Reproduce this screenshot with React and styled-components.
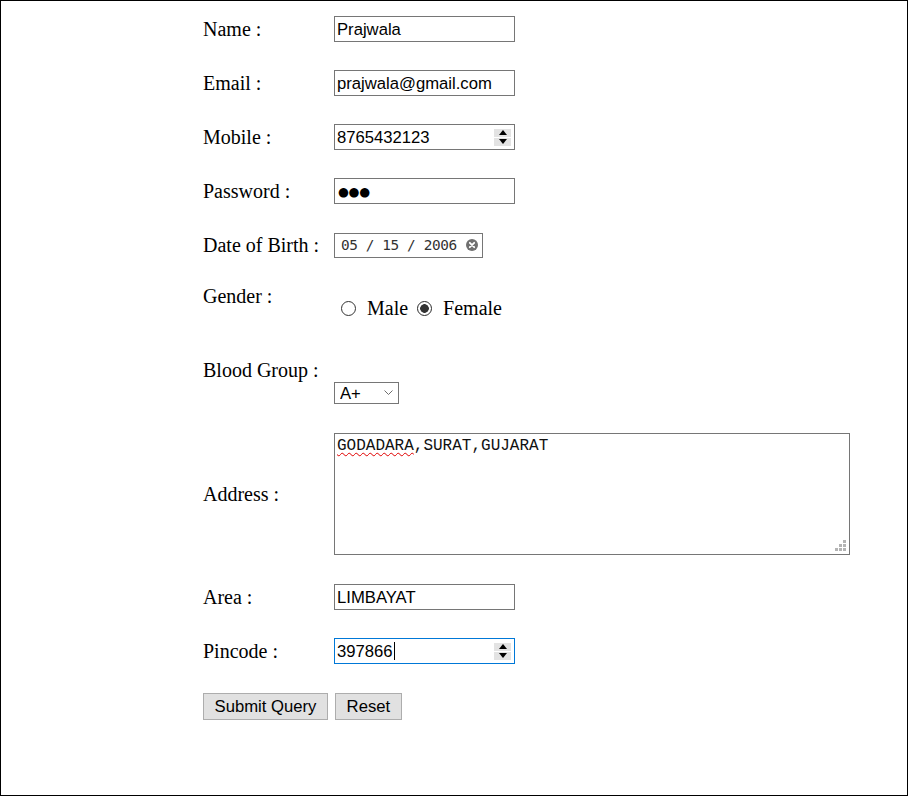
import React from 'react';
import styled, { createGlobalStyle } from 'styled-components';

const GlobalStyle = createGlobalStyle`
  * {
    box-sizing: border-box;
  }
  html,
  body {
    margin: 0;
    padding: 0;
    background: #fff;
  }
  body {
    font-family: "Liberation Serif", "Times New Roman", serif;
    color: #000;
  }
`;

const controlFont = `16.67px "Liberation Sans", Arial, sans-serif`;

function App() {
  return (
    <>
      <GlobalStyle />
      <Page>
        <Form onSubmit={e => e.preventDefault()}>
          <Row h={54}>
            <Label>Name :</Label>
            <TextInput type="text" defaultValue="Prajwala" />
          </Row>
          <Row h={54}>
            <Label>Email :</Label>
            <TextInput type="text" defaultValue="prajwala@gmail.com" />
          </Row>
          <Row h={54}>
            <Label>Mobile :</Label>
            <NumberField value="8765432123" />
          </Row>
          <Row h={54}>
            <Label>Password :</Label>
            <FieldBox aria-label="password">
              <Dots>●●●</Dots>
            </FieldBox>
          </Row>
          <Row h={54}>
            <Label>Date of Birth :</Label>
            <DateBox>
              <DateText>05 / 15 / 2006</DateText>
              <ClearIcon />
            </DateBox>
          </Row>
          <Row h={49}>
            <Label>Gender :</Label>
            <Stack lead={23}>
              <RadioLine>
                <RadioOption first>
                  <Radio type="radio" name="gender" value="male" />
                  Male
                </RadioOption>
                <RadioOption>
                  <Radio type="radio" name="gender" value="female" defaultChecked />
                  Female
                </RadioOption>
              </RadioLine>
            </Stack>
          </Row>
          <Row h={98}>
            <Label>Blood Group :</Label>
            <Stack lead={46}>
              <SelectBox>
                <Select defaultValue="A+">
                  <option>A+</option>
                  <option>A-</option>
                  <option>B+</option>
                  <option>B-</option>
                  <option>O+</option>
                  <option>O-</option>
                  <option>AB+</option>
                  <option>AB-</option>
                </Select>
                <Chevron width="9" height="5" viewBox="0 0 9 5">
                  <path d="M0.5 0.5 L4.5 4.5 L8.5 0.5" fill="none" stroke="#6d6d6d" strokeWidth="1" />
                </Chevron>
              </SelectBox>
            </Stack>
          </Row>
          <Row h={150}>
            <Label>Address :</Label>
            <AddressBox>
              <Misspelled>GODADARA</Misspelled>,SURAT,GUJARAT
              <Grip width="11" height="11" viewBox="0 0 11 11">
                <rect x="8" y="0" width="3" height="3" fill="#b4b4b4" />
                <rect x="4" y="4" width="3" height="3" fill="#b4b4b4" />
                <rect x="8" y="4" width="3" height="3" fill="#b4b4b4" />
                <rect x="0" y="8" width="3" height="3" fill="#b4b4b4" />
                <rect x="4" y="8" width="3" height="3" fill="#b4b4b4" />
                <rect x="8" y="8" width="3" height="3" fill="#b4b4b4" />
              </Grip>
            </AddressBox>
          </Row>
          <Row h={56}>
            <Label>Area :</Label>
            <TextInput type="text" defaultValue="LIMBAYAT" />
          </Row>
          <Row h={52}>
            <Label>Pincode :</Label>
            <NumberField value="397866" focused />
          </Row>
          <ButtonRow>
            <Button type="submit">Submit Query</Button>
            <Button type="reset">Reset</Button>
          </ButtonRow>
        </Form>
      </Page>
    </>
  );
}

function NumberField({ value, focused }) {
  return (
    <FieldBox focused={focused}>
      <FieldText>{value}</FieldText>
      {focused && <Caret />}
      <Spinner>
        <SpinHalf>
          <svg width="8" height="5" viewBox="0 0 8 5">
            <path d="M0 5 L4 0 L8 5 Z" fill="#000" />
          </svg>
        </SpinHalf>
        <SpinHalf>
          <svg width="8" height="5" viewBox="0 0 8 5">
            <path d="M0 0 L4 5 L8 0 Z" fill="#000" />
          </svg>
        </SpinHalf>
      </Spinner>
    </FieldBox>
  );
}

function ClearIcon() {
  return (
    <ClearSvg width="12" height="12" viewBox="0 0 12 12">
      <circle cx="6" cy="6" r="6" fill="#6f6f6f" />
      <path d="M3.8 3.8 L8.2 8.2 M8.2 3.8 L3.8 8.2" stroke="#fff" strokeWidth="1.8" strokeLinecap="round" />
    </ClearSvg>
  );
}

export default App;

const Page = styled.div`
  width: 908px;
  height: 796px;
  border: 1px solid #000;
  padding: 1px 0 0 202px;
`;

const Form = styled.form`
  display: flex;
  flex-direction: column;
`;

const Row = styled.div`
  display: grid;
  grid-template-columns: 131px auto;
  align-items: center;
  justify-items: start;
  height: ${p => p.h}px;
`;

const Label = styled.div`
  font-size: 20px;
  line-height: 23px;
  white-space: nowrap;
`;

const TextInput = styled.input`
  display: block;
  width: 181px;
  height: 26px;
  margin: 0;
  padding: 2px 2px 0;
  border: 1px solid #767676;
  border-radius: 0;
  background: #fff;
  color: #000;
  font: ${controlFont};
  outline: none;
`;

const FieldBox = styled.div`
  display: flex;
  align-items: center;
  width: 181px;
  height: 26px;
  padding: 2px 3px 0 2px;
  border: 1px solid ${p => (p.focused ? '#0078d7' : '#767676')};
  background: #fff;
  font: ${controlFont};
`;

const FieldText = styled.span`
  white-space: nowrap;
`;

const Dots = styled.span`
  margin: -2px 0 0 1px;
  font: 12.5px "DejaVu Sans", sans-serif;
  letter-spacing: -0.3px;
  color: #000;
`;

const Caret = styled.span`
  width: 1px;
  height: 18px;
  margin: -2px 0 0 1px;
  background: #000;
`;

const Spinner = styled.div`
  display: flex;
  flex-direction: column;
  gap: 1px;
  width: 17px;
  height: 17px;
  margin: -2px 0 0 auto;
`;

const SpinHalf = styled.div`
  flex: 1;
  display: flex;
  align-items: center;
  justify-content: center;
  background: #e3e3e3;
`;

const DateBox = styled.div`
  display: flex;
  align-items: center;
  width: 149px;
  height: 25px;
  padding: 0 4px 0 6px;
  border: 1px solid #767676;
  background: #fff;
`;

const DateText = styled.span`
  font: 14.4px "DejaVu Sans Mono", "Liberation Mono", monospace;
  letter-spacing: -0.4px;
  color: #333;
  white-space: pre;
`;

const ClearSvg = styled.svg`
  display: block;
  margin-left: auto;
`;

const Stack = styled.div`
  display: flex;
  flex-direction: column;
  padding-top: ${p => p.lead}px;
`;

const RadioLine = styled.div`
  display: flex;
  align-items: center;
  height: 23px;
  font-size: 20px;
`;

const RadioOption = styled.label`
  display: inline-flex;
  align-items: center;
  gap: 11px;
  margin-left: ${p => (p.first ? 7 : 9)}px;
`;

const Radio = styled.input`
  appearance: none;
  width: 15px;
  height: 15px;
  margin: 0;
  border: 1px solid #333;
  border-radius: 50%;
  background: #fff;

  &:checked {
    border-color: #2b2b2b;
    background: radial-gradient(circle, #333 0 4px, #fff 4.6px);
  }
`;

const SelectBox = styled.div`
  position: relative;
  width: 65px;
  height: 22px;
`;

const Select = styled.select`
  appearance: none;
  display: block;
  width: 65px;
  height: 22px;
  margin: 0;
  padding: 1px 0 0 5px;
  border: 1px solid #767676;
  border-radius: 0;
  background: #fff;
  color: #000;
  font: ${controlFont};
  outline: none;
`;

const Chevron = styled.svg`
  position: absolute;
  right: 6px;
  top: 8px;
  pointer-events: none;
`;

const AddressBox = styled.div`
  position: relative;
  width: 516px;
  height: 122px;
  padding: 3px 2px 2px;
  border: 1px solid #767676;
  background: #fff;
  font: 16px "Liberation Mono", "Courier New", monospace;
  color: #111;
  white-space: pre;
`;

const Misspelled = styled.span`
  text-decoration: underline wavy #e00000;
  text-decoration-skip-ink: none;
  text-decoration-thickness: 1px;
  text-underline-offset: 2px;
`;

const Grip = styled.svg`
  position: absolute;
  right: 3px;
  bottom: 3px;
`;

const ButtonRow = styled.div`
  display: flex;
  align-items: center;
  gap: 7px;
  height: 59px;
`;

const Button = styled.button`
  height: 27px;
  margin: 0;
  padding: 1px 10.6px 0;
  border: 1px solid #adadad;
  border-radius: 0;
  background: #e1e1e1;
  color: #000;
  font: ${controlFont};
  cursor: pointer;
`;
